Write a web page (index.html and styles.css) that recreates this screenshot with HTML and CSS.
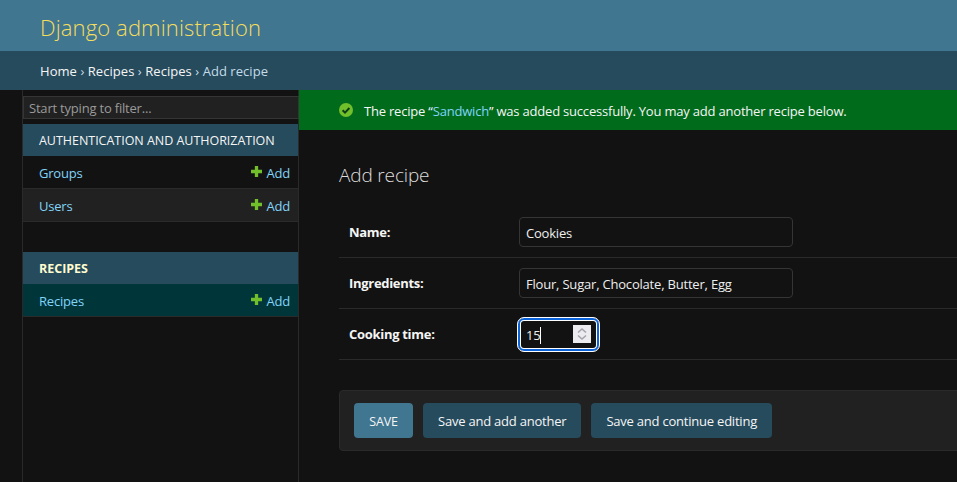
FILE: index.html
```html
<!DOCTYPE html>
<html lang="en">
<head>
    <meta charset="UTF-8">
    <meta name="viewport" content="width=device-width, initial-scale=1.0">
    <title>Add recipe | Django site admin</title>
    <link rel="stylesheet" href="styles.css">
</head>
<body>
    <!-- Header -->
    <header class="site-header">
        <a class="site-name" href="#">Django administration</a>
    </header>
    <nav class="breadcrumbs">
        <a href="#">Home</a> › <a href="#">Recipes</a> › <a href="#">Recipes</a> › Add recipe
    </nav>

    <div class="page">
        <!-- Sidebar -->
        <aside class="sidebar">
            <input class="nav-filter" type="text" placeholder="Start typing to filter...">

            <div class="app-module">
                <div class="app-caption">Authentication and Authorization</div>
                <div class="model-row">
                    <a href="#">Groups</a>
                    <a class="add-link" href="#"><svg class="plus" viewBox="0 0 10 10"><path d="M3.500 0h3v3.500h3.500v3h-3.500v3.500h-3v-3.500h-3.500v-3h3.500z"/></svg>Add</a>
                </div>
                <div class="model-row alt">
                    <a href="#">Users</a>
                    <a class="add-link" href="#"><svg class="plus" viewBox="0 0 10 10"><path d="M3.500 0h3v3.500h3.500v3h-3.500v3.500h-3v-3.500h-3.500v-3h3.500z"/></svg>Add</a>
                </div>
            </div>

            <div class="app-module">
                <div class="app-caption current">Recipes</div>
                <div class="model-row selected">
                    <a href="#">Recipes</a>
                    <a class="add-link" href="#"><svg class="plus" viewBox="0 0 10 10"><path d="M3.500 0h3v3.500h3.500v3h-3.500v3.500h-3v-3.500h-3.500v-3h3.500z"/></svg>Add</a>
                </div>
            </div>
        </aside>

        <main class="main">
            <div class="message">
                <svg class="check" viewBox="0 0 14 14">
                    <circle cx="7" cy="7" r="7" fill="#70bf2b"/>
                    <path d="M3.600 7.200l2.400 2.400 4.400-4.600" fill="none" stroke="#0d3d18" stroke-width="2"/>
                </svg>
                <span class="message-text">The recipe “<a href="#">Sandwich</a>” was added successfully. You may add another recipe below.</span>
            </div>

            <div class="content">
                <h1>Add recipe</h1>

                <form>
                    <div class="form-row">
                        <label for="name">Name:</label>
                        <input class="text-input" id="name" type="text" value="Cookies">
                    </div>
                    <div class="form-row">
                        <label for="ingredients">Ingredients:</label>
                        <input class="text-input" id="ingredients" type="text" value="Flour, Sugar, Chocolate, Butter, Egg">
                    </div>
                    <div class="form-row">
                        <label for="time">Cooking time:</label>
                        <div class="number-input">
                            <span class="number-value">15</span>
                            <span class="spinner">
                                <svg viewBox="0 0 18 18"><path d="M5 7.500l4-3.500 4 3.500M5 10.500l4 3.500 4-3.500" fill="none" stroke="#a3a3ab" stroke-width="1.500"/></svg>
                            </span>
                        </div>
                    </div>

                    <div class="submit-row">
                        <button class="btn default" type="button">SAVE</button>
                        <button class="btn" type="button">Save and add another</button>
                        <button class="btn" type="button">Save and continue editing</button>
                    </div>
                </form>
            </div>
        </main>
    </div>
</body>
</html>
```

FILE: styles.css
```css
* {
    box-sizing: border-box;
}

html, body {
    height: 100%;
}

body {
    margin: 0;
    background-color: #121212;
    color: #eeeeee;
    font-family: "Open Sans", "Noto Sans", sans-serif;
    font-size: 13px;
    overflow: hidden;
    display: flex;
    flex-direction: column;
}

a {
    color: #81d4fa;
    text-decoration: none;
}

/* Header */
.site-header {
    height: 51px;
    flex-shrink: 0;
    background-color: #417690;
    padding: 10px 40px;
}

.site-name {
    color: #f5dd5d;
    font-size: 22px;
    font-weight: 300;
    line-height: 34px;
    letter-spacing: 0.13px;
}

.breadcrumbs {
    height: 39px;
    flex-shrink: 0;
    background-color: #264b5d;
    padding: 0 40px;
    line-height: 41px;
    font-size: 13px;
    color: #c4dce8;
    letter-spacing: 0.05px;
}

.breadcrumbs a {
    color: #f5f5f5;
}

/* Sidebar */
.page {
    flex: 1;
    display: flex;
    min-height: 0;
}

.sidebar {
    width: 299px;
    flex-shrink: 0;
    padding: 6px 0 0 22px;
    background: linear-gradient(#2a2a2a, #2a2a2a) 298px 0 / 1px 100% no-repeat,
                linear-gradient(#2a2a2a, #2a2a2a) 22px 0 / 1px 100% no-repeat;
}

.nav-filter {
    display: block;
    width: 276px;
    height: 23px;
    margin-left: 1px;
    margin-bottom: 5px;
    padding: 0 5px;
    background-color: #212121;
    border: 1px solid #353535;
    color: #eeeeee;
    font-family: inherit;
    font-size: 13px;
    letter-spacing: -0.2px;
}

.nav-filter::placeholder {
    color: #9a9a9a;
    opacity: 1;
}

.app-module {
    margin: 0 1px 30px 1px;
}

.app-caption {
    height: 32px;
    line-height: 34px;
    padding-left: 16px;
    background-color: #264b5d;
    color: #f5f5f5;
    font-size: 12.500px;
    text-transform: uppercase;
    letter-spacing: -0.03px;
}

.app-caption.current {
    font-weight: 700;
    color: #fffccf;
}

.model-row {
    height: 33px;
    display: flex;
    justify-content: space-between;
    align-items: center;
    padding: 2px 8px 0 16px;
    border-bottom: 1px solid #2a2a2a;
    letter-spacing: -0.2px;
}

.model-row.alt {
    background-color: #212121;
}

.model-row.selected {
    background-color: #00363a;
}

.add-link {
    display: flex;
    align-items: center;
}

.plus {
    width: 11px;
    height: 11px;
    margin: -4px 4px 0 0;
    fill: #70bf2b;
}

/* Main */
.main {
    flex: 1;
    min-width: 0;
}

.message {
    height: 40px;
    display: flex;
    align-items: center;
    gap: 11px;
    padding-left: 40px;
    background-color: #006b1b;
    color: #f5f5f5;
    letter-spacing: -0.2px;
}

.message-text {
    margin-top: 2px;
}

.check {
    width: 14px;
    height: 14px;
}

.content {
    padding: 33px 0 0 40px;
    margin-right: -40px;
}

h1 {
    margin: 0 0 20px;
    color: #dddddd;
    font-size: 19px;
    font-weight: 300;
    line-height: 24px;
    letter-spacing: -0.15px;
}

.form-row {
    display: flex;
    align-items: center;
    height: 51px;
    padding-left: 10px;
    border-bottom: 1px solid #2a2a2a;
}

.form-row label {
    width: 170px;
    flex-shrink: 0;
    font-weight: 700;
    color: #f5f5f5;
    letter-spacing: -0.3px;
}

.text-input {
    width: 274px;
    height: 30px;
    padding: 2px 6px 0;
    background-color: #121212;
    border: 1px solid #353535;
    border-radius: 4px;
    color: #eeeeee;
    font-family: inherit;
    font-size: 13px;
    letter-spacing: -0.2px;
}

.number-input {
    width: 83px;
    height: 35px;
    margin-left: -2px;
    display: flex;
    align-items: center;
    justify-content: space-between;
    padding: 0 8px;
    background-color: #121212;
    border: 1px solid #ffffff;
    border-radius: 7px;
    box-shadow: inset 0 0 0 2px #0a63d8, inset 0 0 0 3px #ffffff;
}

.number-value {
    width: 15px;
    margin-top: 2px;
    border-right: 1px solid #ffffff;
    line-height: 17px;
    letter-spacing: -0.2px;
}

.spinner {
    width: 18px;
    height: 18px;
    background-color: #ebebf0;
}

.spinner svg {
    display: block;
}

.submit-row {
    display: flex;
    gap: 10px;
    margin-top: 30px;
    padding: 12px 14px;
    background-color: #212121;
    border: 1px solid #2a2a2a;
    border-radius: 4px;
}

.btn {
    height: 35px;
    padding: 0 15px;
    background-color: #264b5d;
    border: none;
    border-radius: 4px;
    color: #f5f5f5;
    font-family: inherit;
    font-size: 13px;
    letter-spacing: -0.22px;
}

.btn.default {
    min-width: 59px;
    padding-top: 1px;
    background-color: #417690;
    font-size: 12.500px;
    letter-spacing: -0.2px;
}
```
